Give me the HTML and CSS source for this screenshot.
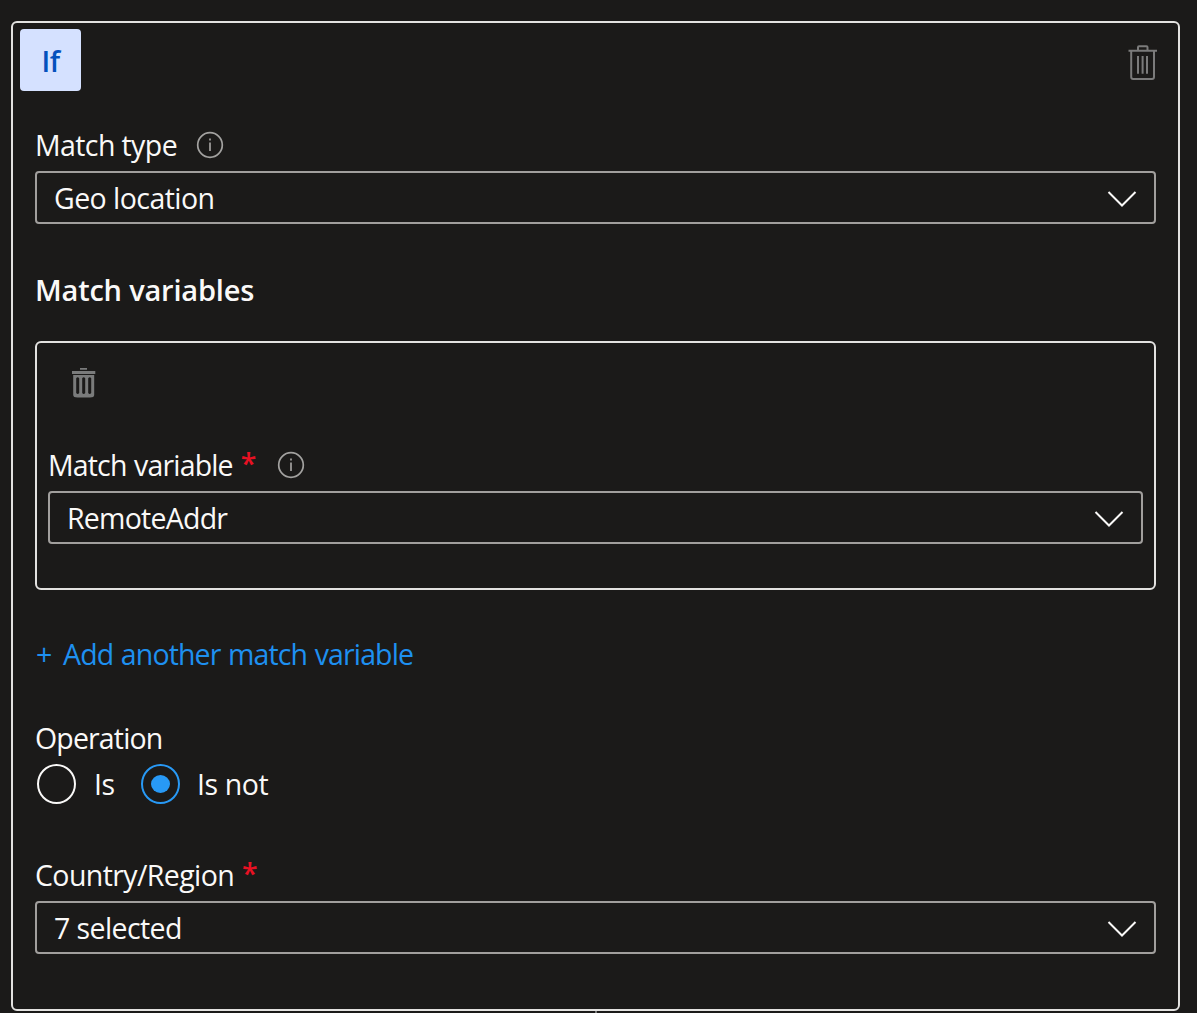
FILE: index.html
```html
<!DOCTYPE html>
<html lang="en">
<head>
<meta charset="utf-8">
<title>Rule condition</title>
<link rel="stylesheet" href="styles.css">
</head>
<body>
<main class="card">
  <header class="card-header">
    <span class="badge">If</span>
    <svg class="trash-outline" width="30" height="36" viewBox="0 0 30 36" fill="none" stroke="#7b7b7b" stroke-width="2"><path d="M0.5 5.7H29M10 5V2.2Q10 1.2 11 1.2H18.5Q19.5 1.2 19.5 2.2V5M3.2 6V32Q3.2 34 5.2 34H24Q26 34 26 32V6M10 11V28.8M14.6 11V28.8M19 11V28.8"/></svg>
  </header>
  <section class="card-body">
    <div class="label first"><span class="t-type">Match type</span>
      <svg class="info" viewBox="0 0 28 28"><circle cx="14" cy="14" r="12.3"/><path d="M14 11.5V20M14 7.6V9.6"/></svg>
    </div>
    <div class="select"><span class="t-geo">Geo location</span><svg class="chevron" viewBox="0 0 30 18"><path d="M1.5 2L15 15.5L28.5 2"/></svg></div>
    <h2 class="heading">Match variables</h2>
    <div class="box">
      <svg class="trash-solid" width="24" height="30" viewBox="0 0 24 30"><path fill="#7a7b7b" fill-rule="evenodd" d="M8 0H15V1.7H8ZM0 3H23.3V6H0ZM1.2 7H22.2V27Q22.2 29.5 18 29.5H5.5Q1.2 29.5 1.2 27ZM4.2 10.2V25Q5.7 27 7.2 25V10.2Q5.7 8.2 4.2 10.2ZM10.2 10.2V25Q11.7 27 13.2 25V10.2Q11.7 8.2 10.2 10.2ZM16.2 10.2V25Q17.7 27 19.2 25V10.2Q17.7 8.2 16.2 10.2Z"/></svg>
      <div class="label inner"><span class="t-var">Match variable</span><span class="star">*</span>
        <svg class="info" viewBox="0 0 28 28"><circle cx="14" cy="14" r="12.3"/><path d="M14 11.5V20M14 7.6V9.6"/></svg>
      </div>
      <div class="select"><span class="t-addr">RemoteAddr</span><svg class="chevron" viewBox="0 0 30 18"><path d="M1.5 2L15 15.5L28.5 2"/></svg></div>
    </div>
    <a class="add"><span class="plus">+</span><span class="t-add">Add another match variable</span></a>
    <div class="label operation"><span class="t-op">Operation</span></div>
    <div class="radios">
      <span class="radio"></span><span class="option t-is">Is</span>
      <span class="radio checked"></span><span class="option t-not">Is not</span>
    </div>
    <div class="label country"><span class="t-country">Country/Region</span><span class="star">*</span></div>
    <div class="select"><span class="t-sel">7 selected</span><svg class="chevron" viewBox="0 0 30 18"><path d="M1.5 2L15 15.5L28.5 2"/></svg></div>
  </section>
</main>
<div class="connector"></div>
</body>
</html>
```
FILE: styles.css
```css
* { box-sizing: border-box; }
body {
  margin: 0;
  padding: 21px 17px 0 11px;
  height: 1013px;
  overflow: hidden;
  background: #1b1a19;
  color: #faf9f8;
  font: 28.5px/40px "Open Sans", "Noto Sans", sans-serif;
  letter-spacing: -0.4px;
  white-space: nowrap;
}
.card { height: 990px; border: 2px solid #e3e2e0; border-radius: 6px; }
.card-header { display: flex; justify-content: space-between; padding: 6px 20px 0 7px; height: 68px; }
.badge {
  width: 61px; height: 62px; border-radius: 4px;
  background: #d5e1ff; color: #0450bd;
  font-weight: 600; line-height: 64px; text-align: center;
}
.trash-outline { margin-top: 16px; }
.card-body { padding: 0 22px; }
.label { display: flex; align-items: center; height: 40px; margin-bottom: 5px; }
.label span { margin-top: -2px; }
.first { width: 189px; margin-top: 35px; }
.info { width: 28px; height: 28px; margin: -2px 0 0 auto; fill: none; stroke: #a3a2a0; stroke-width: 1.7; }
.label .star { margin: -6px 0 0 8px; color: #e81123; font-weight: 600; }
.select {
  display: flex; align-items: center; justify-content: space-between;
  height: 53px; padding: 0 17px 0 17px;
  border: 2px solid #a19f9d; border-radius: 4px;
}
.chevron { width: 30px; height: 18px; margin-top: 3px; fill: none; stroke: #faf9f8; stroke-width: 2; }
.heading { margin: 46px 0 31px; font-size: 29px; font-weight: 600; line-height: 40px; letter-spacing: -0.2px; }
.box { height: 249px; padding: 25px 11px 0; border: 2px solid #e3e2e0; border-radius: 6px; }
.trash-solid { display: block; margin-left: 24px; }
.inner { width: 257px; margin-top: 48px; }
.add { display: flex; height: 40px; margin-top: 44px; color: #1e90f0; }
.plus { width: 28px; padding-left: 1px; }
.operation { margin: 45px 0 5px; }
.radios { display: flex; align-items: center; height: 40px; padding-left: 2px; }
.radio { display: flex; align-items: center; justify-content: center; width: 39px; height: 40px; border: 2px solid #faf9f8; border-radius: 50%; }
.checked { border-color: #2899f5; }
.checked::after { content: ""; width: 19px; height: 18px; border-radius: 50%; background: #2899f5; }
.option { margin-left: 18px; }
.t-is { width: 47px; }
.t-not { margin-left: 17px; }
.t-type { letter-spacing: -0.6px; }
.t-geo { letter-spacing: -0.55px; }
.t-addr { letter-spacing: -0.76px; }
.t-var { letter-spacing: -0.84px; word-spacing: 1px; }
.t-add { letter-spacing: -0.87px; word-spacing: 1px; }
.t-op { letter-spacing: -0.85px; }
.t-country, .t-sel { letter-spacing: -0.6px; }
.country { margin-top: 52px; }
.connector { width: 2px; height: 2px; margin-left: 584px; background: #777; }
```
